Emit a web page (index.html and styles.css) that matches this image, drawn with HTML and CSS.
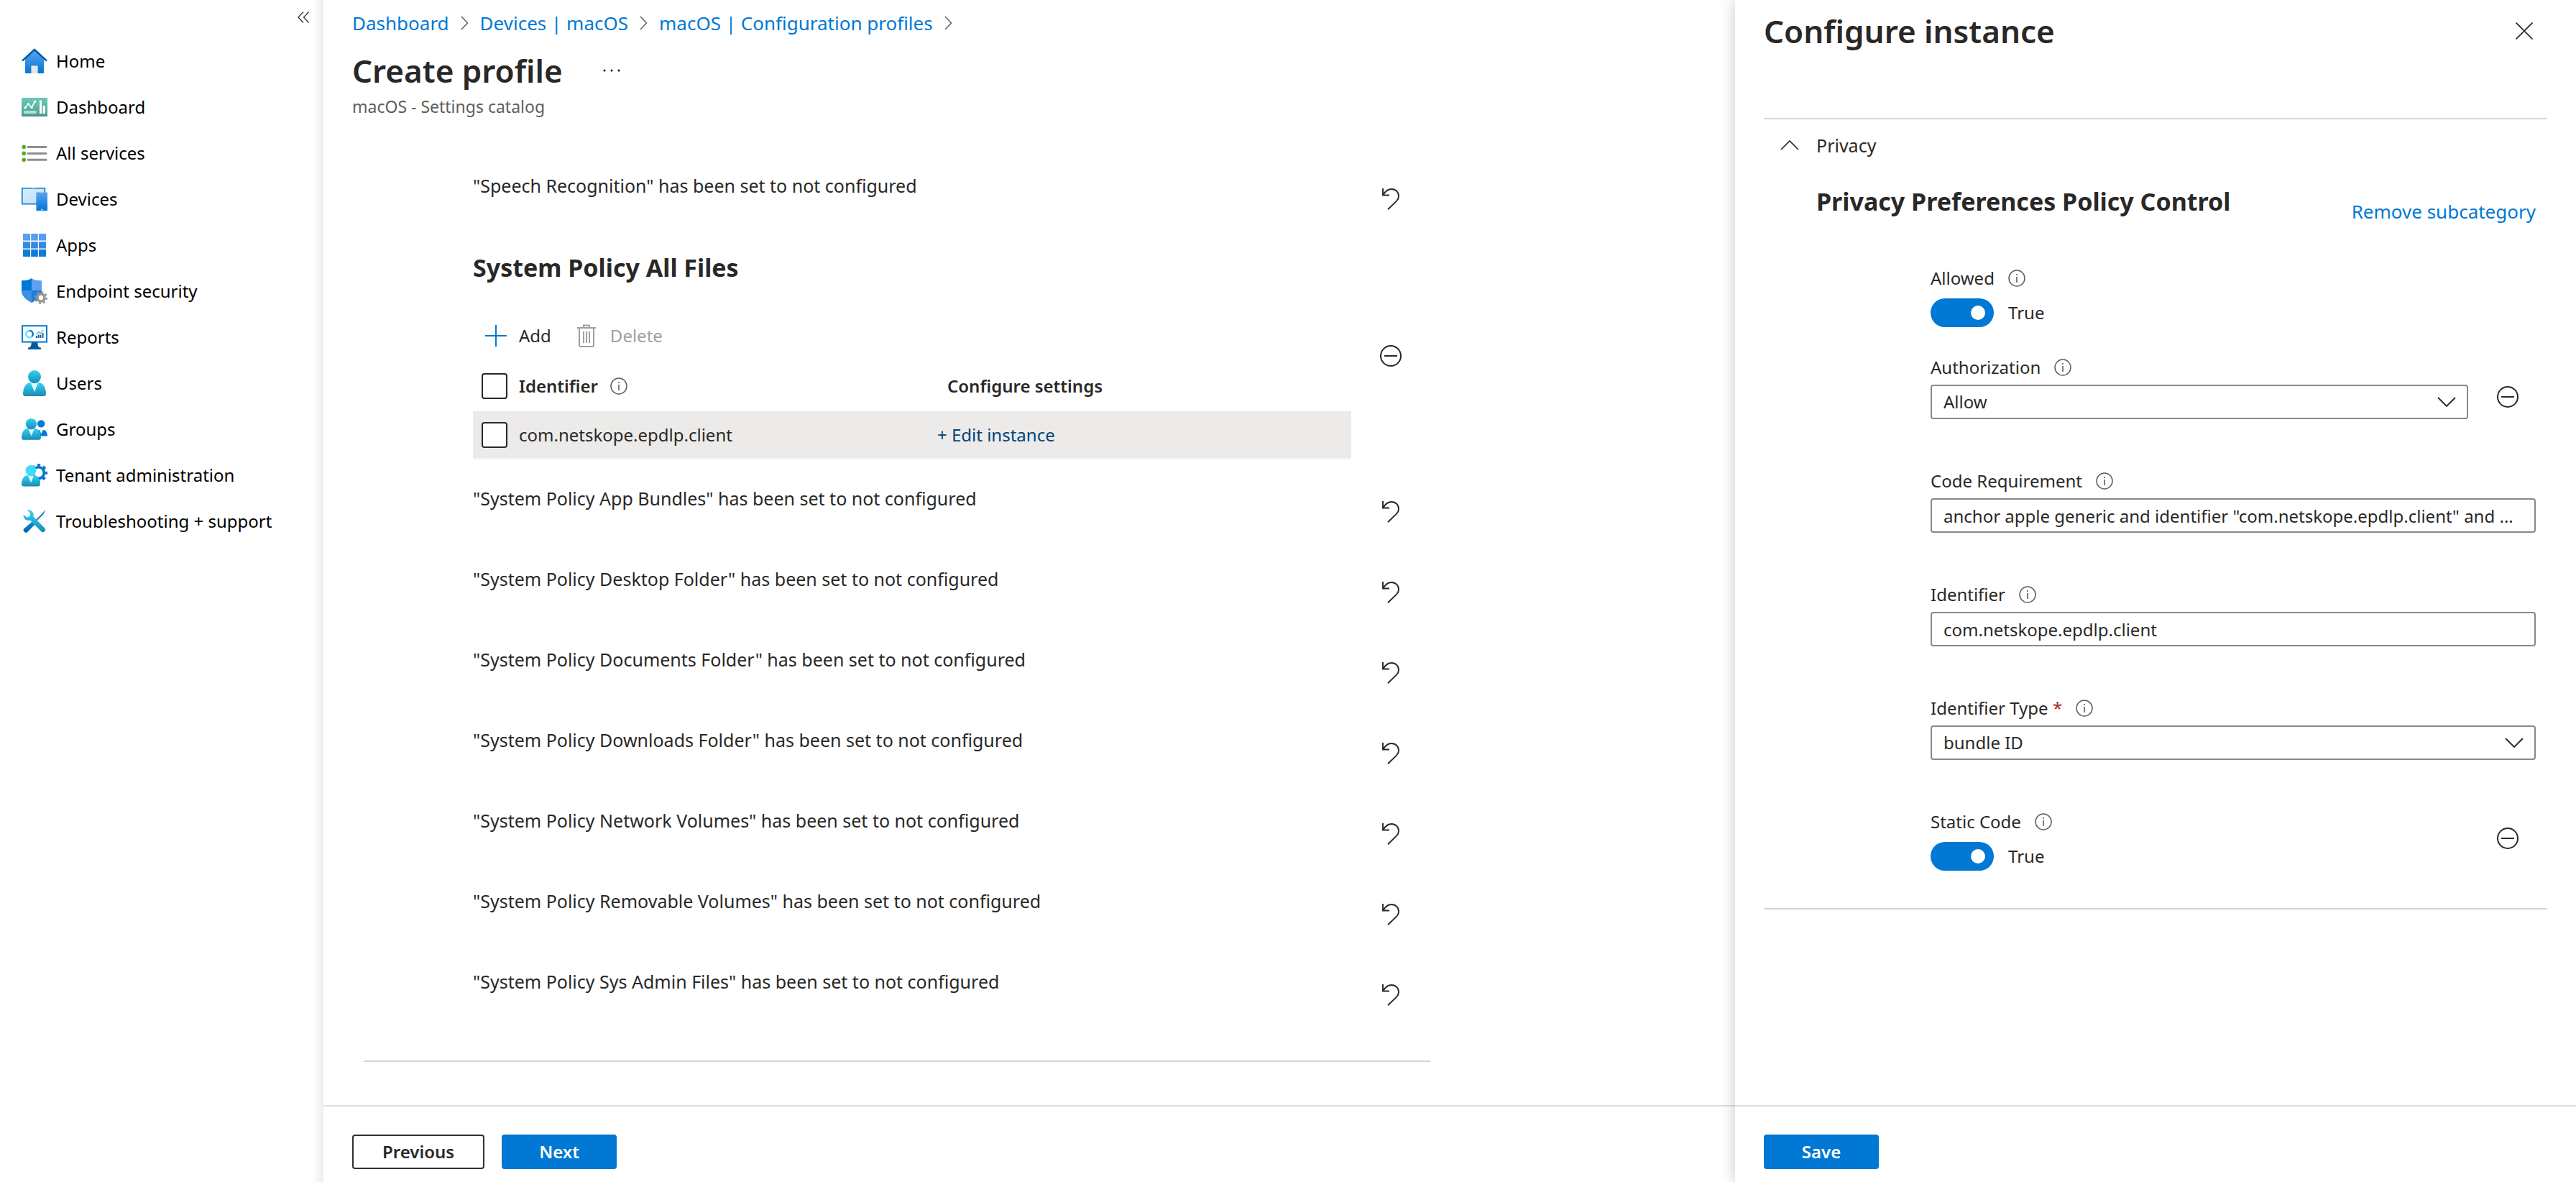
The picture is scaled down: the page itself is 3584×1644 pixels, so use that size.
FILE: index.html
```html
<!DOCTYPE html>
<html lang="en">
<head>
<meta charset="utf-8">
<title>Create profile</title>
<meta name="viewport" content="width=device-width, initial-scale=1">
<link rel="stylesheet" href="styles.css">
</head>
<body>
<svg class="defs" aria-hidden="true">
  <defs>
    <linearGradient id="g-blue" x1="0" y1="0" x2="0" y2="1"><stop offset="0" stop-color="#5ea0ef"/><stop offset="1" stop-color="#0078d4"/></linearGradient>
    <linearGradient id="g-teal" x1="0" y1="0" x2="0" y2="1"><stop offset="0" stop-color="#6bc9b8"/><stop offset="1" stop-color="#4b9f90"/></linearGradient>
    <linearGradient id="g-glass" x1="0" y1="0" x2="1" y2="1"><stop offset="0" stop-color="#d9effa"/><stop offset="1" stop-color="#bcdcf8"/></linearGradient>
    <linearGradient id="g-cyan" x1="0" y1="0" x2="0" y2="1"><stop offset="0" stop-color="#32d4f5"/><stop offset="1" stop-color="#198ab3"/></linearGradient>
    <linearGradient id="g-navy" x1="0" y1="0" x2="0" y2="1"><stop offset="0" stop-color="#1490df"/><stop offset="1" stop-color="#005ba1"/></linearGradient>
    <symbol id="i-info" viewBox="0 0 24 24"><circle cx="12" cy="12" r="11" fill="none" stroke="#605e5c" stroke-width="1.5"/><path d="M12 10v8M12 6v2" stroke="#605e5c" stroke-width="1.6"/></symbol>
    <symbol id="i-minus" viewBox="0 0 30 30"><circle cx="15" cy="15" r="14" fill="none" stroke="#292827" stroke-width="2"/><path d="M6 15h18" stroke="#292827" stroke-width="2"/></symbol>
    <symbol id="i-undo" viewBox="0 0 30 30"><path d="M4 0v9.500h9" fill="none" stroke="#292827" stroke-width="1.900"/><path d="M4.500 9C8 3 11.500 1 16 1c6 0 10 4.400 10 9.800 0 2.600-1 4.800-3 6.800L11 29.300" fill="none" stroke="#292827" stroke-width="1.900"/></symbol>
    <symbol id="i-down" viewBox="0 0 26 14"><path d="M1 1l12 12L25 1" fill="none" stroke="#292827" stroke-width="1.900"/></symbol>
    <symbol id="i-right" viewBox="0 0 11 20"><path d="M1 1l8.500 9L1 19" fill="none" stroke="#605e5c" stroke-width="1.500"/></symbol>
    <symbol id="i-trash" viewBox="0 0 26 32"><path d="M0 5h26M9 5V1.500h8V5M3 5v24q0 2 2 2h16q2 0 2-2V5M9 10v16M13 10v16M17 10v16" fill="none" stroke="#a19f9d" stroke-width="2"/></symbol>
  </defs>
</svg>
<div class="app">
  <nav class="sidebar" aria-label="Main">
    <button class="icon-button collapse" aria-label="Collapse menu">
      <svg width="16" height="16" viewBox="0 0 16 16"><path d="M8 .5L1 8l7 7.500M15.500.5L8.500 8l7 7.500" fill="none" stroke="#323130" stroke-width="1.300"/></svg>
    </button>
    <ul class="nav-list">
      <li><a href="#"><svg class="nav-icon" viewBox="0 0 18 18"><path d="M9 1.500l6.500 6v9.500q0 .5-.5.5H3q-.5 0-.5-.5V7.500z" fill="url(#g-blue)"/><path d="M6.700 12.200h4.600v5.300H6.700z" fill="#e6e6e6"/><path d="M.5 8.800L9 1l8.500 7.800" fill="none" stroke="#005ba1" stroke-width="1.300"/></svg>Home</a></li>
      <li><a href="#"><svg class="nav-icon" viewBox="0 0 18 18"><path d="M0 2.500h18v13H0z" fill="url(#g-teal)"/><path d="M0 14.900h18v.6H0z" fill="#41897c"/><path d="M2.600 9.300l2.100-2.600 2.300 2.600 2.300-4.300" fill="none" stroke="#fff" stroke-width=".8"/><circle cx="2.600" cy="9.400" r=".9" fill="#fff"/><circle cx="4.700" cy="6.800" r=".8" fill="#fff"/><circle cx="7" cy="9.200" r=".8" fill="#fff"/><circle cx="9.300" cy="5.200" r=".9" fill="#fff"/><path d="M12.500 4.200H14v9.300h-1.500zM14.800 8h1.600v5.500h-1.600z" fill="#fff"/><path d="M1.700 11.500h8.600v2H1.700z" fill="#fff" opacity=".6"/></svg>Dashboard</a></li>
      <li><a href="#"><svg class="nav-icon" viewBox="0 0 18 18"><g fill="#65a82a"><circle cx="1.600" cy="4.700" r="1.400"/><circle cx="1.600" cy="9.200" r="1.400"/><circle cx="1.600" cy="13.600" r="1.400"/></g><path d="M4.500 4.700h12.500M4.500 9.200h12.500M4.500 13.600h12.500" stroke="#8f8f8f" stroke-width="1.500" stroke-linecap="round"/></svg>All services</a></li>
      <li><a href="#"><svg class="nav-icon" viewBox="0 0 18 18"><path d="M.4 1.400h15.800v11H.4z" fill="url(#g-glass)" stroke="#0078d4" stroke-width=".8"/><path d="M7.500 1h2v.6h-2z" fill="#83b9f9"/><rect x="10.200" y="4.200" width="7.800" height="12.800" rx=".3" fill="url(#g-blue)"/><path d="M13 4.400h2.200" stroke="#b5d5f8" stroke-width=".4"/><circle cx="14.200" cy="16.200" r=".5" fill="#fff"/></svg>Devices</a></li>
      <li><a href="#"><svg class="nav-icon" viewBox="0 0 18 18"><path d="M1.300 1H6v4.800H1V1.300zM6.600 1h4.800v4.800H6.600zM12 1h4.700l.3.300v4.500h-5z" fill="#589df0"/><path d="M1 6.600h5v4.600H1zM6.600 6.600h4.800v4.600H6.600zM12 6.600h5v4.600h-5z" fill="#3489e1"/><path d="M1 12h5v5H1.300L1 16.700zM6.600 12h4.800v5H6.600zM12 12h5v4.700l-.3.300H12z" fill="#0c7cd7"/></svg>Apps</a></li>
      <li><a href="#"><svg class="nav-icon" viewBox="0 0 18 18"><path d="M7 0c2 1.500 4 1.500 7 1.600V8c0 4.500-3.500 7-7 9-3.500-2-7-4.500-7-9V1.600C3 1.500 5 1.500 7 0z" fill="#5ea0ef"/><path d="M7 0v8.500H0V1.600C3 1.500 5 1.500 7 0z" fill="#0078d4"/><path d="M7 8.500h7c0 4.300-3.500 6.500-7 8.500z" fill="#1a7edb"/><path d="M0 8.500h7V17c-3.500-2-7-4.200-7-8.500z" fill="#3f8fe6"/><circle cx="13.500" cy="13.500" r="2.500" fill="#fff" stroke="#949494" stroke-width="1.800"/><circle cx="13.500" cy="13.500" r="3.900" fill="none" stroke="#949494" stroke-width="1.200" stroke-dasharray="1.530 1.530"/></svg>Endpoint security</a></li>
      <li><a href="#"><svg class="nav-icon" viewBox="0 0 18 18"><path d="M6.800 12.500h4.400c0 2.800.5 3.600 2.300 3.800v1.200h-9v-1.200c1.800-.2 2.300-1 2.300-3.800z" fill="#005ba1"/><rect x=".5" y="1.100" width="17" height="11.200" fill="#fff" stroke="#0078d4"/><path d="M5.500 4.400a2.400 2.400 0 1 0 1.700 4.100" fill="none" stroke="#50e6ff" stroke-width="1.100"/><path d="M5.500 4.400a2.400 2.400 0 0 1 1.700 4.100" fill="none" stroke="#0078d4" stroke-width="1.100"/><path d="M10.400 9.500V8M11.800 9.500V7.200M13.200 9.500V7.400M14.800 9.500V6" stroke="#005ba1" stroke-width=".9"/><path d="M10.200 6.900l1.800-1.600 1.200 1.200L15 4" fill="none" stroke="#32bedd" stroke-width=".6"/></svg>Reports</a></li>
      <li><a href="#"><svg class="nav-icon" viewBox="0 0 18 18"><path d="M1 16.500C1 12 3 8.700 6 8.600h6c3 .1 5 3.400 5 7.900q-.2 1.500-1.500 1.500h-13Q1.200 18 1 16.500z" fill="url(#g-cyan)"/><path d="M6.500 9h5L9 15z" fill="#e2f8fd"/><circle cx="9" cy="4.500" r="4.500" fill="url(#g-cyan)"/></svg>Users</a></li>
      <li><a href="#"><svg class="nav-icon" viewBox="0 0 18 18"><path d="M11 9.600h5c1.200.5 2 2.300 2 4.200h-7z" fill="#0078d4"/><path d="M12.500 9.400h2.400l-1.200 3z" fill="#e2f8fd"/><circle cx="13.600" cy="5.200" r="2.600" fill="#0078d4"/><path d="M0 15c0-3.500 1.600-6.400 4-6.500h5.500c2.400.1 4 3 4 6.500q-.2 1.400-1.300 1.400H1.300Q.1 16.400 0 15z" fill="url(#g-cyan)"/><path d="M4.800 8.900h4l-2 4.900z" fill="#e2f8fd"/><circle cx="6.700" cy="5.300" r="3.800" fill="url(#g-cyan)"/></svg>Groups</a></li>
      <li><a href="#"><svg class="nav-icon" viewBox="0 0 18 18"><circle cx="11.800" cy="7.300" r="3.900" fill="none" stroke="#0078d4" stroke-width="1.800"/><circle cx="11.800" cy="7.300" r="5.400" fill="none" stroke="#0078d4" stroke-width="1.700" stroke-dasharray="2.120 2.120" stroke-dashoffset="1"/><path d="M0 15.400C0 12 1.600 9.200 3.900 9.100h5.200c2.300.1 3.900 2.900 3.900 6.300q-.2 1.300-1.300 1.300H1.300Q.1 16.700 0 15.400z" fill="url(#g-cyan)"/><path d="M4.500 9.400h4l-2 4.800z" fill="#e2f8fd"/><circle cx="6.500" cy="5.700" r="3.700" fill="#3fdcf7"/></svg>Tenant administration</a></li>
      <li><a href="#"><svg class="nav-icon" viewBox="0 0 18 18"><path d="M16.700 1l-1.300 3-5 5-.8-.8 5-5z" fill="#198ab3"/><path d="M7.300 9.200l2 2-5.500 5.500q-.8.500-1.500-.1l-.9-1q-.4-.6.200-1.300z" fill="url(#g-navy)"/><path d="M4 1.200c3-.4 5 2 4.200 4.500l8 8.200q.8 1 0 2.100-1.100 1.100-2.200.5L6 8.300C3.500 9 1 7.200 1.300 4.200l2.200 2 2.200-.6.400-2z" fill="url(#g-cyan)"/></svg>Troubleshooting + support</a></li>
    </ul>
  </nav>

  <main class="page">
    <header class="page-header">
      <nav class="breadcrumb" aria-label="Breadcrumb">
        <a href="#">Dashboard</a><svg class="crumb-arrow"><use href="#i-right"/></svg>
        <a href="#">Devices | macOS</a><svg class="crumb-arrow"><use href="#i-right"/></svg>
        <a href="#">macOS | Configuration profiles</a><svg class="crumb-arrow"><use href="#i-right"/></svg>
      </nav>
      <div class="title-row">
        <h1>Create profile</h1>
        <button class="icon-button" aria-label="More"><svg width="24" height="4" viewBox="0 0 24 4"><circle cx="2" cy="2" r="1.500"/><circle cx="12" cy="2" r="1.500"/><circle cx="22" cy="2" r="1.500"/></svg></button>
      </div>
      <p class="subtitle">macOS - Settings catalog</p>
    </header>

    <div class="settings">
      <div class="settings-list">
        <div class="setting setting-lead"><p>"Speech Recognition" has been set to not configured</p><button class="icon-button" aria-label="Undo"><svg class="icon-30"><use href="#i-undo"/></svg></button></div>

        <section class="all-files">
          <h2>System Policy All Files</h2>
          <div class="all-files-body">
            <div class="grid-block">
              <div class="toolbar">
                <button class="tool"><svg class="icon-30" viewBox="0 0 30 30"><path d="M15 0v30M0 15h30" stroke="#0078d4" stroke-width="2"/></svg>Add</button>
                <button class="tool tool-delete" disabled><svg class="icon-trash"><use href="#i-trash"/></svg>Delete</button>
              </div>
              <table class="instances">
                <thead>
                  <tr>
                    <th class="col-check"><input type="checkbox" class="check" aria-label="Select all"></th>
                    <th class="col-id"><span class="with-info">Identifier<svg class="info"><use href="#i-info"/></svg></span></th>
                    <th class="col-config">Configure settings</th>
                  </tr>
                </thead>
                <tbody>
                  <tr>
                    <td class="col-check"><input type="checkbox" class="check" aria-label="Select com.netskope.epdlp.client"></td>
                    <td>com.netskope.epdlp.client</td>
                    <td><a class="edit" href="#">+ Edit instance</a></td>
                  </tr>
                </tbody>
              </table>
            </div>
            <button class="icon-button" aria-label="Remove setting"><svg class="icon-30"><use href="#i-minus"/></svg></button>
          </div>
        </section>

        <div class="setting"><p>"System Policy App Bundles" has been set to not configured</p><button class="icon-button" aria-label="Undo"><svg class="icon-30"><use href="#i-undo"/></svg></button></div>
        <div class="setting"><p>"System Policy Desktop Folder" has been set to not configured</p><button class="icon-button" aria-label="Undo"><svg class="icon-30"><use href="#i-undo"/></svg></button></div>
        <div class="setting"><p>"System Policy Documents Folder" has been set to not configured</p><button class="icon-button" aria-label="Undo"><svg class="icon-30"><use href="#i-undo"/></svg></button></div>
        <div class="setting"><p>"System Policy Downloads Folder" has been set to not configured</p><button class="icon-button" aria-label="Undo"><svg class="icon-30"><use href="#i-undo"/></svg></button></div>
        <div class="setting"><p>"System Policy Network Volumes" has been set to not configured</p><button class="icon-button" aria-label="Undo"><svg class="icon-30"><use href="#i-undo"/></svg></button></div>
        <div class="setting"><p>"System Policy Removable Volumes" has been set to not configured</p><button class="icon-button" aria-label="Undo"><svg class="icon-30"><use href="#i-undo"/></svg></button></div>
        <div class="setting"><p>"System Policy Sys Admin Files" has been set to not configured</p><button class="icon-button" aria-label="Undo"><svg class="icon-30"><use href="#i-undo"/></svg></button></div>
      </div>
    </div>

    <footer class="actions">
      <button class="button">Previous</button>
      <button class="button button-primary">Next</button>
    </footer>
  </main>

  <aside class="panel" aria-labelledby="panel-title">
    <header class="panel-header">
      <h1 id="panel-title">Configure instance</h1>
      <button class="icon-button close" aria-label="Close"><svg width="24" height="24" viewBox="0 0 24 24"><path d="M.5.5l23 23M23.500.5l-23 23" stroke="#292827" stroke-width="1.700"/></svg></button>
    </header>
    <section class="panel-section">
      <button class="accordion"><svg width="26" height="14" viewBox="0 0 26 14"><path d="M1 13L13 1l12 12" fill="none" stroke="#292827" stroke-width="1.700"/></svg>Privacy</button>
      <div class="subcategory">
        <div class="subcategory-head">
          <h2>Privacy Preferences Policy Control</h2>
          <a href="#">Remove subcategory</a>
        </div>
        <form class="fields">
          <div class="field field-toggle">
            <div class="label-row"><label for="allowed">Allowed</label><svg class="info"><use href="#i-info"/></svg></div>
            <div class="toggle-row"><input type="checkbox" role="switch" class="toggle" id="allowed" checked><span>True</span></div>
          </div>
          <div class="field-row">
            <div class="field">
              <div class="label-row"><label for="auth">Authorization</label><svg class="info"><use href="#i-info"/></svg></div>
              <div class="select"><select id="auth"><option>Allow</option></select><svg class="select-arrow"><use href="#i-down"/></svg></div>
            </div>
            <button type="button" class="icon-button remove-select" aria-label="Remove Authorization"><svg class="icon-30"><use href="#i-minus"/></svg></button>
          </div>
          <div class="field">
            <div class="label-row"><label for="code">Code Requirement</label><svg class="info"><use href="#i-info"/></svg></div>
            <input type="text" class="text-box" id="code" value='anchor apple generic and identifier "com.netskope.epdlp.client" and ...'>
          </div>
          <div class="field">
            <div class="label-row"><label for="ident">Identifier</label><svg class="info"><use href="#i-info"/></svg></div>
            <input type="text" class="text-box" id="ident" value="com.netskope.epdlp.client">
          </div>
          <div class="field">
            <div class="label-row"><label for="type">Identifier Type <span class="required">*</span></label><svg class="info"><use href="#i-info"/></svg></div>
            <div class="select"><select id="type"><option>bundle ID</option></select><svg class="select-arrow"><use href="#i-down"/></svg></div>
          </div>
          <div class="field-row field-last">
            <div class="field field-toggle">
              <div class="label-row"><label for="static">Static Code</label><svg class="info"><use href="#i-info"/></svg></div>
              <div class="toggle-row"><input type="checkbox" role="switch" class="toggle" id="static" checked><span>True</span></div>
            </div>
            <button type="button" class="icon-button remove-toggle" aria-label="Remove Static Code"><svg class="icon-30"><use href="#i-minus"/></svg></button>
          </div>
        </form>
      </div>
    </section>
    <footer class="actions">
      <button class="button button-primary">Save</button>
    </footer>
  </aside>
</div>
</body>
</html>
```
FILE: styles.css
```css
* { box-sizing: border-box; }

body {
  margin: 0;
  background: #fff;
  color: #292827;
  font: 24px/36px "Noto Sans", "Open Sans", sans-serif;
}

h1, h2, p, ul { margin: 0; padding: 0; }
ul { list-style: none; }
a { color: #0078d4; text-decoration: none; }
button, input, select { font: inherit; color: inherit; }

h1 { font-size: 44px; line-height: 64px; font-weight: 600; }
h2 { font-size: 34px; line-height: 48px; font-weight: 700; }

.defs { position: absolute; width: 0; height: 0; }

.app {
  display: grid;
  grid-template-columns: 450px minmax(0, 1fr) 1170px;
  min-height: 100vh;
}

.icon-button {
  display: flex;
  flex: none;
  padding: 0;
  border: 0;
  background: none;
  cursor: pointer;
}
.icon-30 { display: block; width: 30px; height: 30px; }

/* Left navigation */
.sidebar {
  background: linear-gradient(to left, #eee, #fff 16px);
}
.collapse { margin: 16px 20px 21px auto; }
.nav-list a {
  display: flex;
  align-items: center;
  gap: 12px;
  height: 64px;
  padding-left: 30px;
  color: #000;
}
.nav-icon { flex: none; width: 36px; height: 36px; }

/* Main page */
.page { display: flex; flex-direction: column; }
.page-header { padding: 14px 40px 0; }
.breadcrumb {
  display: flex;
  align-items: center;
  gap: 16px;
  font-size: 26px;
}
.crumb-arrow { width: 11px; height: 20px; }
.title-row {
  display: flex;
  align-items: center;
  gap: 56px;
  margin-top: 16px;
}
.subtitle { color: #605e5c; font-size: 23px; }

.settings {
  flex: 1;
  max-width: 1484px;
  width: 100%;
  margin: 74px 0 60px 56px;
  padding: 0 40px 16px 152px;
  border-bottom: 2px solid #d6d6d6;
}
.setting {
  display: flex;
  justify-content: space-between;
  align-items: flex-start;
  height: 112px;
  font-size: 25px;
}
.setting-lead { height: 108px; }
.setting .icon-button { margin-top: 22px; }

.all-files { margin-bottom: 36px; }
.all-files-body {
  display: flex;
  align-items: flex-start;
  justify-content: space-between;
  margin-top: 47px;
}
.all-files-body > .icon-button { margin-top: 37px; }
.grid-block { flex: 0 1 1222px; }
.toolbar { display: flex; gap: 36px; height: 59px; padding-left: 17px; }
.tool {
  display: flex;
  align-items: center;
  gap: 17px;
  height: 48px;
  padding: 0;
  border: 0;
  background: none;
}
.tool-delete { gap: 20px; color: #a19f9d; }
.icon-trash { width: 26px; height: 32px; }

.instances {
  width: 100%;
  border-collapse: collapse;
  table-layout: fixed;
  text-align: left;
}
.instances th { height: 70px; padding: 0; font-weight: 600; }
.instances td {
  height: 66px;
  padding: 0;
  background: #ecebea;
  border-bottom: 2px solid #f3f2f1;
}
.instances .col-check { width: 64px; padding-left: 12px; }
.instances .col-id { width: 582px; }
.instances .col-config { padding-left: 14px; }
.with-info { display: flex; align-items: center; gap: 17px; }
.info { flex: none; width: 24px; height: 24px; }
.check {
  display: block;
  appearance: none;
  width: 36px;
  height: 36px;
  margin: 0;
  border: 2px solid #292827;
  border-radius: 4px;
  background: #fff;
}
.edit { color: #004578; }

/* Footers */
.actions {
  display: flex;
  gap: 24px;
  height: 108px;
  padding: 39px 40px;
  border-top: 2px solid #dedede;
}
.button {
  min-width: 160px;
  height: 48px;
  padding: 0 40px;
  border: 2px solid #323130;
  border-radius: 4px;
  background: #fff;
  font-weight: 600;
  line-height: 36px;
}
.button-primary { border-color: #0078d4; background: #0078d4; color: #fff; }

/* Configure instance panel */
.panel {
  display: flex;
  flex-direction: column;
  background: #fff;
  box-shadow: 0 0 20px rgba(0, 0, 0, 0.22);
}
.panel-header {
  display: flex;
  justify-content: space-between;
  align-items: center;
  padding: 11px 60px 0 40px;
}
.panel-section {
  margin: 89px 40px auto;
  border: solid #d6d6d6;
  border-width: 2px 0;
}
.accordion {
  display: flex;
  align-items: center;
  gap: 24px;
  height: 72px;
  padding: 0 0 0 23px;
  border: 0;
  background: none;
  font-size: 25px;
}
.subcategory { padding: 18px 16px 0 73px; }
.subcategory-head { display: flex; justify-content: space-between; }
.subcategory-head a { margin-top: 20px; font-size: 26px; }
.fields { padding: 57px 0 0 159px; }
.field { margin-bottom: 68px; }
.field-toggle { margin-bottom: 38px; }
.label-row { display: flex; align-items: center; gap: 19px; margin-bottom: 6px; }
.field-toggle .label-row { margin-bottom: 10px; }
.required { color: #a4262c; }
.field-row {
  display: flex;
  align-items: flex-start;
  gap: 40px;
  padding-right: 24px;
}
.field-row .field { flex: 1; }
.remove-select { margin-top: 44px; }
.remove-toggle { margin-top: 26px; }
.field-last .field { margin-bottom: 52px; }

.toggle-row { display: flex; align-items: center; gap: 20px; height: 40px; }
.toggle {
  display: flex;
  align-items: center;
  justify-content: flex-end;
  appearance: none;
  width: 88px;
  height: 40px;
  margin: 0;
  padding: 0 12px;
  border-radius: 20px;
  background: #0078d4;
}
.toggle::before {
  content: "";
  width: 20px;
  height: 20px;
  border-radius: 50%;
  background: #fff;
}

.text-box, .select select {
  display: block;
  width: 100%;
  height: 48px;
  padding: 0 16px;
  border: 2px solid #8a8886;
  border-radius: 4px;
  background: #fff;
  line-height: 36px;
}
.select { display: grid; align-items: center; }
.select > * { grid-area: 1 / 1; }
.select select { appearance: none; }
.select-arrow {
  justify-self: end;
  width: 26px;
  height: 14px;
  margin-right: 17px;
  pointer-events: none;
}
```
